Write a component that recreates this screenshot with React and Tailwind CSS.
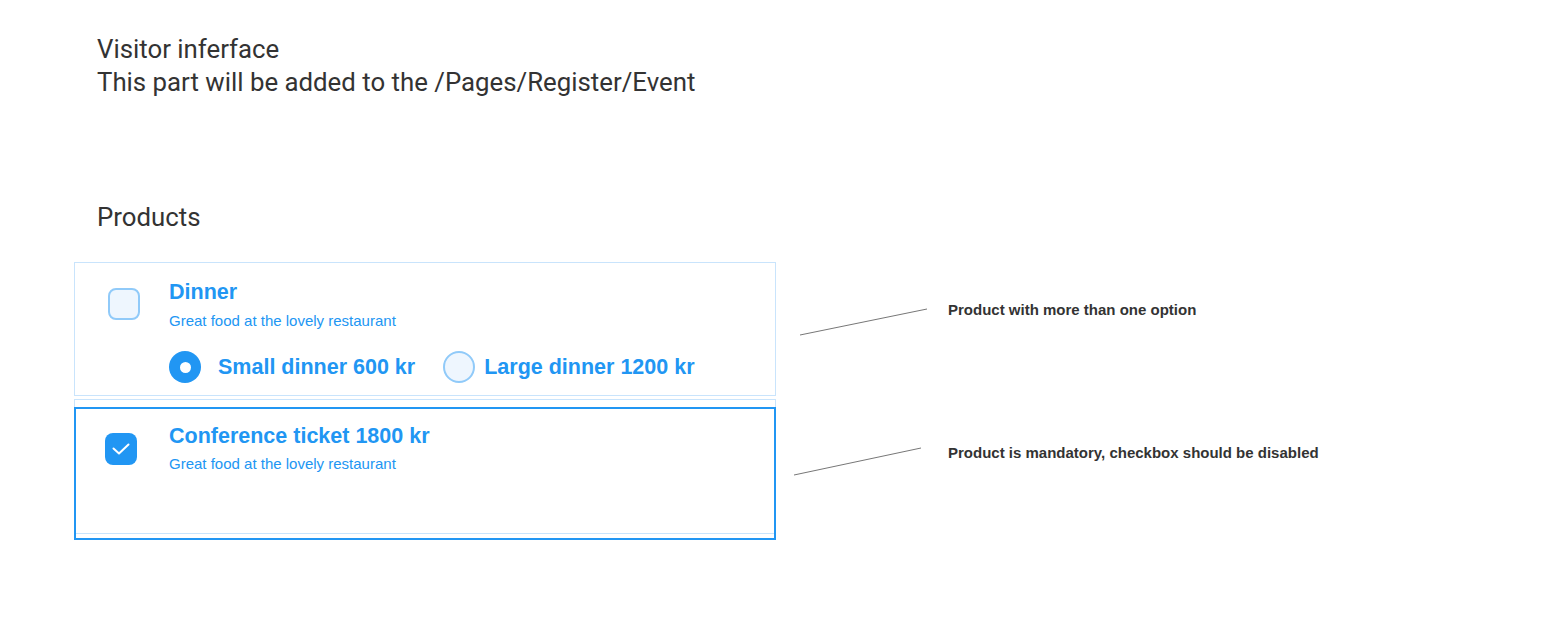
import React from 'react';

const Checkbox = ({ checked }) =>
  checked ? (
    <div className="w-8 h-8 rounded-[8px] bg-[#2196f3] flex items-center justify-center shrink-0">
      <svg width="32" height="32" viewBox="0 0 32 32" fill="none">
        <path d="M8.5 15.5 L14 20.5 L23.5 11.5" stroke="#fff" strokeWidth="2" strokeLinecap="round" strokeLinejoin="round" />
      </svg>
    </div>
  ) : (
    <div className="w-8 h-8 rounded-[8px] bg-[#eef6fe] border-2 border-[#90caf9] shrink-0" />
  );

const Radio = ({ checked }) =>
  checked ? (
    <div className="w-8 h-8 rounded-full bg-[#2196f3] flex items-center justify-center shrink-0">
      <div className="w-[11px] h-[11px] rounded-full bg-white" />
    </div>
  ) : (
    <div className="w-8 h-8 rounded-full bg-[#eef6fe] border-2 border-[#90caf9] shrink-0" />
  );

const Note = ({ x1, y1, x2, y2, top, children }) => (
  <div className="flex items-start">
    <svg width="152" height="120" className="shrink-0">
      <line x1={x1} y1={y1} x2={x2} y2={y2} stroke="#777" strokeWidth="1" />
    </svg>
    <p
      className="ml-5 text-[15px] leading-[18px] font-bold text-[#333] whitespace-nowrap"
      style={{ marginTop: top }}
    >
      {children}
    </p>
  </div>
);

export default function App() {
  return (
    <div className="w-[1566px] h-[630px] bg-white font-['Liberation_Sans',Arial,sans-serif] overflow-hidden">
      <div className="pl-[97px] pt-[33px] font-['Roboto',sans-serif] text-[25.8px] leading-[33px] text-[#333]">
        <p>Visitor inferface</p>
        <p>This part will be added to the /Pages/Register/Event</p>
      </div>

      <h2 className="pl-[97px] mt-[102px] font-['Roboto',sans-serif] text-[25.8px] leading-[33px] text-[#333]">
        Products
      </h2>

      <div className="pl-[74px] mt-[28px] flex flex-col">
        <div className="flex">
          <div className="w-[702px] h-[134px] border border-[#c9e4fc] flex pl-[33px] pt-[17px]">
            <div className="mt-[8px]">
              <Checkbox />
            </div>
            <div className="ml-[29px] text-[#2196f3]">
              <h3 className="text-[21.5px] leading-6 font-bold">Dinner</h3>
              <p className="mt-2 text-[15px] leading-[18px]">Great food at the lovely restaurant</p>
              <div className="mt-[21px] flex items-center">
                <Radio checked />
                <span className="ml-[17px] text-[21.5px] leading-6 font-bold">Small dinner 600 kr</span>
                <div className="ml-[28px]">
                  <Radio />
                </div>
                <span className="ml-[9px] text-[21.5px] leading-6 font-bold">Large dinner 1200 kr</span>
              </div>
            </div>
          </div>
          <Note x1={24} y1={73} x2={151} y2={47} top={39}>
            Product with more than one option
          </Note>
        </div>

        <div className="flex mt-[3px]">
          <div className="relative w-[702px] h-[135px] border border-[#c9e4fc] flex pl-[30px] pt-[24px]">
            <div className="absolute left-[-1px] right-[-1px] top-[7px] bottom-[-7px] border-2 border-[#2196f3]" />
            <div className="mt-[9px]">
              <Checkbox checked />
            </div>
            <div className="ml-[32px] text-[#2196f3]">
              <h3 className="text-[21.5px] leading-6 font-bold">Conference ticket 1800 kr</h3>
              <p className="mt-[7px] text-[15px] leading-[18px]">Great food at the lovely restaurant</p>
            </div>
          </div>
          <Note x1={18} y1={76} x2={145} y2={49} top={45}>
            Product is mandatory, checkbox should be disabled
          </Note>
        </div>
      </div>
    </div>
  );
}
